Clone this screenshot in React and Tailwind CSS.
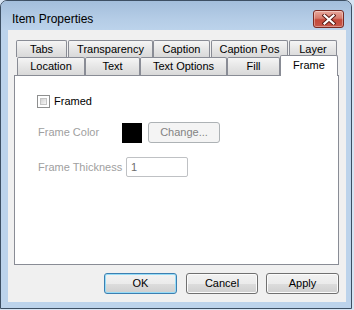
import React from "react";

const FONT = "font-['Liberation_Sans',Arial,sans-serif]";

const tabBase =
  "h-full flex items-center justify-center border border-b-0 border-[#898c95] rounded-t-[2px] bg-[linear-gradient(#f5f5f5,#e6e6e6_50%,#d9d9d9)] text-[11px] leading-none text-black shrink-0";

const btnBase =
  "h-[21px] w-[72px] flex items-center justify-center rounded-[3px] text-[11px] text-black bg-[linear-gradient(#f2f2f2_0%,#ebebeb_50%,#dddddd_50%,#cfcfcf_100%)]";

const CloseButton = () => (
  <div className="mt-[9px] mr-[7px] w-[31px] h-[18px] rounded-[3px] border border-[#7a2a22] bg-[linear-gradient(#e9a99d,#d67b6c_45%,#c4493a_55%,#c8584a)] shadow-[inset_0_0_0_1px_rgba(255,255,255,0.35)] flex items-center justify-center">
    <svg width="14" height="11" viewBox="0 0 14 11">
      <path d="M2.5 1.5 L11.5 9.5 M11.5 1.5 L2.5 9.5" stroke="#5a1c16" strokeWidth="4" strokeLinecap="square" />
      <path d="M2.5 1.5 L11.5 9.5 M11.5 1.5 L2.5 9.5" stroke="#ffffff" strokeWidth="2.2" strokeLinecap="square" />
    </svg>
  </div>
);

export default function App() {
  const row1 = [
    { label: "Tabs", w: "w-[51px]", ml: "ml-0" },
    { label: "Transparency", w: "w-[85px]", ml: "ml-[1px]" },
    { label: "Caption", w: "w-[57px]", ml: "ml-0" },
    { label: "Caption Pos", w: "w-[77px]", ml: "ml-[1px]" },
    { label: "Layer", w: "w-[48px]", ml: "ml-[1px]" },
  ];
  const row2 = [
    { label: "Location", w: "w-[68px]" },
    { label: "Text", w: "w-[55px]" },
    { label: "Text Options", w: "w-[87px]" },
    { label: "Fill", w: "w-[53px]" },
  ];

  return (
    <div className={`w-[354px] h-[310px] bg-[#d6e4f3] ${FONT}`}>
      <div className="w-[352px] h-[309px] rounded-t-[7px] border border-[#3d4f63] bg-[#bcd3eb] flex flex-col overflow-hidden">
        {/* Title bar */}
        <div className="h-[29px] shrink-0 flex justify-between bg-[linear-gradient(#a3bedb,#b4cce6_60%,#bcd3eb)]">
          <div className="pl-[11px] pt-[11px] text-[12px] leading-[14px] text-black">Item Properties</div>
          <CloseButton />
        </div>

        {/* Client */}
        <div className="ml-[7px] w-[338px] h-[272px] bg-[#f0f0f0] flex flex-col pt-[10px] pl-[6px]">
          {/* Tab control */}
          <div className="w-[325px] flex flex-col">
            <div className="h-[17px] flex pl-[2px]">
              {row1.map((t) => (
                <div key={t.label} className={`${tabBase} ${t.w} ${t.ml}`}>
                  {t.label}
                </div>
              ))}
            </div>
            <div className="h-[18px] flex items-end pl-[3px]">
              {row2.map((t) => (
                <div key={t.label} className={`${tabBase} ${t.w}`}>
                  {t.label}
                </div>
              ))}
              <div className="relative z-10 w-[58px] h-[21px] -mb-[1px] border border-b-0 border-[#898c95] rounded-t-[2px] bg-white flex justify-center pt-[4px] text-[11px] leading-none text-black">
                Frame
              </div>
            </div>

            {/* Panel */}
            <div className="h-[190px] border border-[#898c95] bg-white pl-[22px] pt-[19px] flex flex-col">
              <div className="flex items-center h-[13px]">
                <div className="w-[13px] h-[13px] border border-[#8e8f8f] bg-white p-[2px]">
                  <div className="w-full h-full border border-[#c4c4c4] bg-[linear-gradient(135deg,#d2d2d2,#f6f6f6)]" />
                </div>
                <span className="ml-[4px] text-[11px] text-black">Framed</span>
              </div>

              <div className="flex items-center mt-[14px] h-[21px] pl-[1px]">
                <span className="w-[84px] text-[11px] text-[#a0a0a0]">Frame Color</span>
                <div className="w-[20px] h-[20px] bg-black" />
                <div className="ml-[6px] w-[72px] h-[21px] rounded-[3px] border border-[#adb2b5] bg-[#f4f4f4] flex items-center justify-center text-[11px] text-[#838383]">
                  Change...
                </div>
              </div>

              <div className="flex items-center mt-[14px] h-[20px] pl-[1px]">
                <span className="w-[88px] text-[11px] text-[#a0a0a0]">Frame Thickness</span>
                <div className="w-[62px] h-[20px] border border-[#bfc1c4] rounded-[2px] bg-white flex items-center pl-[4px] text-[11px] text-[#6d6d6d]">
                  1
                </div>
              </div>
            </div>
          </div>

          {/* Buttons */}
          <div className="mt-[8px] w-[325px] flex justify-end">
            <div className={`${btnBase} w-[73px] border border-[#3c7fb1] shadow-[inset_0_0_0_1px_#97dcf7]`}>OK</div>
            <div className={`${btnBase} ml-[9px] border border-[#707070] shadow-[inset_0_0_0_1px_#fbfbfb]`}>Cancel</div>
            <div className={`${btnBase} ml-[8px] w-[73px] border border-[#707070] shadow-[inset_0_0_0_1px_#fbfbfb]`}>Apply</div>
          </div>
        </div>
      </div>
    </div>
  );
}
